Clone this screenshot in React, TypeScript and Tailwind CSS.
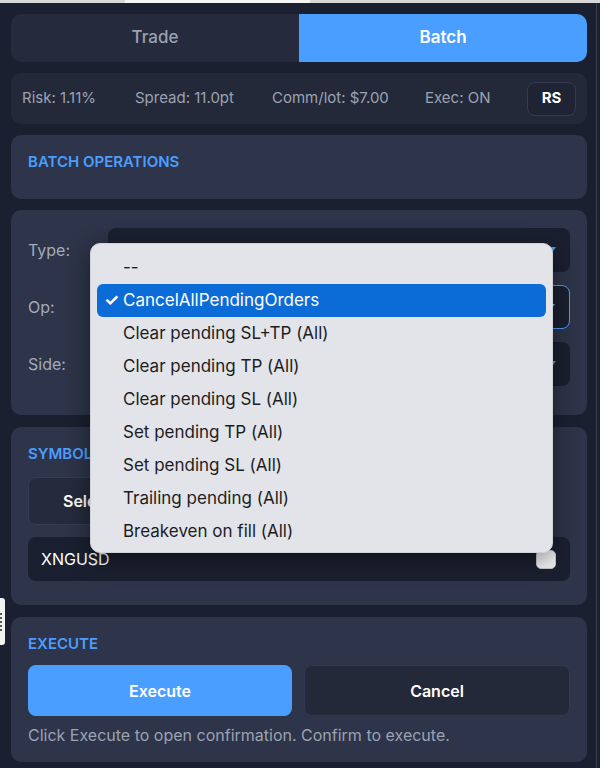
import React from 'react';

const ops = [
  '--',
  'CancelAllPendingOrders',
  'Clear pending SL+TP (All)',
  'Clear pending TP (All)',
  'Clear pending SL (All)',
  'Set pending TP (All)',
  'Set pending SL (All)',
  'Trailing pending (All)',
  'Breakeven on fill (All)',
];

function Caret({ className }: { className: string }) {
  return (
    <svg width="10" height="7" viewBox="0 0 10 7" className={className}>
      <path d="M0 0 L10 0 L5 7 Z" fill="currentColor" />
    </svg>
  );
}

function SelectBox({ focused, caret }: { focused?: boolean; caret: string }) {
  return (
    <div
      className={`flex-1 h-[44px] rounded-[8px] bg-[#1b2030] flex items-center justify-end pr-[14px] ${
        focused ? 'border border-[#4a9eff]' : ''
      }`}
    >
      <Caret className={caret} />
    </div>
  );
}

export default function App() {
  return (
    <div
      className="relative w-[600px] h-[768px] overflow-hidden bg-[#1b2030]"
      style={{ fontFamily: 'Inter, "Noto Sans", sans-serif' }}
    >
      {/* browser edge */}
      <div className="h-[3px] bg-[#d8d8d8] flex">
        <div className="ml-[125px] w-[185px] bg-[#f4f4f4]" />
      </div>

      <div className="pl-[11px] pr-[13px] pt-[11px] flex flex-col">
        {/* Tabs */}
        <div className="h-[48px] rounded-[10px] overflow-hidden flex text-[17px]">
          <div className="flex-1 bg-[#252b3c] text-[#9aa2b1] font-medium flex items-center justify-center">Trade</div>
          <div className="flex-1 bg-[#4a9eff] text-white font-semibold flex items-center justify-center">Batch</div>
        </div>

        {/* Stats */}
        <div className="mt-[11px] h-[51px] rounded-[10px] bg-[#232939] flex items-center pl-[11px] pr-[11px] text-[15px] text-[#9ba3b3]">
          <span className="w-[113px]">Risk: 1.11%</span>
          <span className="w-[137px]">Spread: 11.0pt</span>
          <span className="w-[153px]">Comm/lot: $7.00</span>
          <span>Exec: ON</span>
          <div className="ml-auto w-[49px] h-[34px] rounded-[8px] border border-[#343b52] bg-[#1f2434] text-white font-bold text-[15px] flex items-center justify-center">
            RS
          </div>
        </div>

        {/* Batch operations */}
        <div className="mt-[11px] h-[64px] rounded-[10px] bg-[#2e3449] px-[17px] pt-[18px]">
          <div className="text-[15px] leading-[18px] font-semibold text-[#4a9eff]">BATCH OPERATIONS</div>
        </div>

        {/* Form */}
        <div className="mt-[11px] h-[205px] rounded-[10px] bg-[#2e3449] pl-[17px] pr-[17px] pt-[18px] flex flex-col gap-[13px] text-[16px] text-[#a3abba]">
          <div className="flex items-center">
            <span className="w-[80px]">Type:</span>
            <SelectBox caret="text-[#4a9eff]" />
          </div>
          <div className="flex items-center">
            <span className="w-[80px]">Op:</span>
            <SelectBox focused caret="text-[#8fb8ea]" />
          </div>
          <div className="flex items-center">
            <span className="w-[80px]">Side:</span>
            <SelectBox caret="text-[#7d8db0]" />
          </div>
        </div>

        {/* Symbols */}
        <div className="mt-[12px] h-[178px] rounded-[10px] bg-[#2e3449] px-[17px] pt-[18px]">
          <div className="text-[15px] leading-[18px] font-semibold text-[#4a9eff]">SYMBOLS</div>
          <div className="mt-[14px] flex gap-[12px]">
            <div className="h-[48px] px-[34px] rounded-[8px] border border-[#353c54] bg-[#252b3c] text-white font-semibold text-[16px] flex items-center">
              Select All
            </div>
            <div className="h-[48px] px-[34px] rounded-[8px] border border-[#353c54] bg-[#252b3c] text-white font-semibold text-[16px] flex items-center">
              Clear
            </div>
          </div>
          <div className="mt-[12px] h-[44px] rounded-[8px] bg-[#1b2030] flex items-center pl-[13px] pr-[14px] text-white text-[16px]">
            <span>XNGUSD</span>
            <div className="ml-auto w-[20px] h-[19px] rounded-[5px] bg-[#f2f2f2] border border-[#c9c9c9]" />
          </div>
        </div>

        {/* Execute */}
        <div className="mt-[12px] h-[145px] rounded-[10px] bg-[#2e3449] px-[17px] pt-[18px]">
          <div className="text-[15px] leading-[18px] font-semibold text-[#4a9eff]">EXECUTE</div>
          <div className="mt-[12px] flex gap-[12px]">
            <div className="flex-1 h-[51px] rounded-[8px] bg-[#4a9eff] text-white font-semibold text-[16px] flex items-center justify-center">
              Execute
            </div>
            <div className="flex-1 h-[51px] rounded-[8px] bg-[#232939] border border-[#313850] text-white font-semibold text-[16px] flex items-center justify-center">
              Cancel
            </div>
          </div>
          <div className="mt-[7px] text-[16px] leading-[24px] text-[#9ba3b3]">
            Click Execute to open confirmation. Confirm to execute.
          </div>
        </div>
      </div>

      {/* right edge line */}
      <div className="absolute top-[3px] bottom-0 right-[3px] w-px bg-[#3a3f4c]" />

      {/* left grip tab */}
      <div className="absolute left-0 top-[598px] w-[5px] h-[47px] rounded-r-[3px] bg-[#f2f2f2] flex flex-col items-start justify-center gap-[2px]">
        {[0, 1, 2, 3, 4].map((i) => (
          <div key={i} className="w-[2px] h-[2px] bg-[#555]" />
        ))}
      </div>

      {/* Native select dropdown */}
      <div className="absolute left-[90px] top-[243px] w-[463px] h-[310px] rounded-[10px] bg-[#e2e4ea] shadow-[0_6px_24px_rgba(0,0,0,0.45)] border border-[#cfd2d9] pt-[7px] px-[6px] text-[17px] text-[#1d1d1f]">
        {ops.map((op, i) => (
          <div
            key={op}
            className={`h-[33px] flex items-center rounded-[6px] ${
              i === 1 ? 'bg-[#0b6cd8] text-white' : ''
            }`}
          >
            <span className="w-[26px] pl-[7px] font-bold">{i === 1 ? '✓' : ''}</span>
            <span>{op}</span>
          </div>
        ))}
      </div>
    </div>
  );
}
